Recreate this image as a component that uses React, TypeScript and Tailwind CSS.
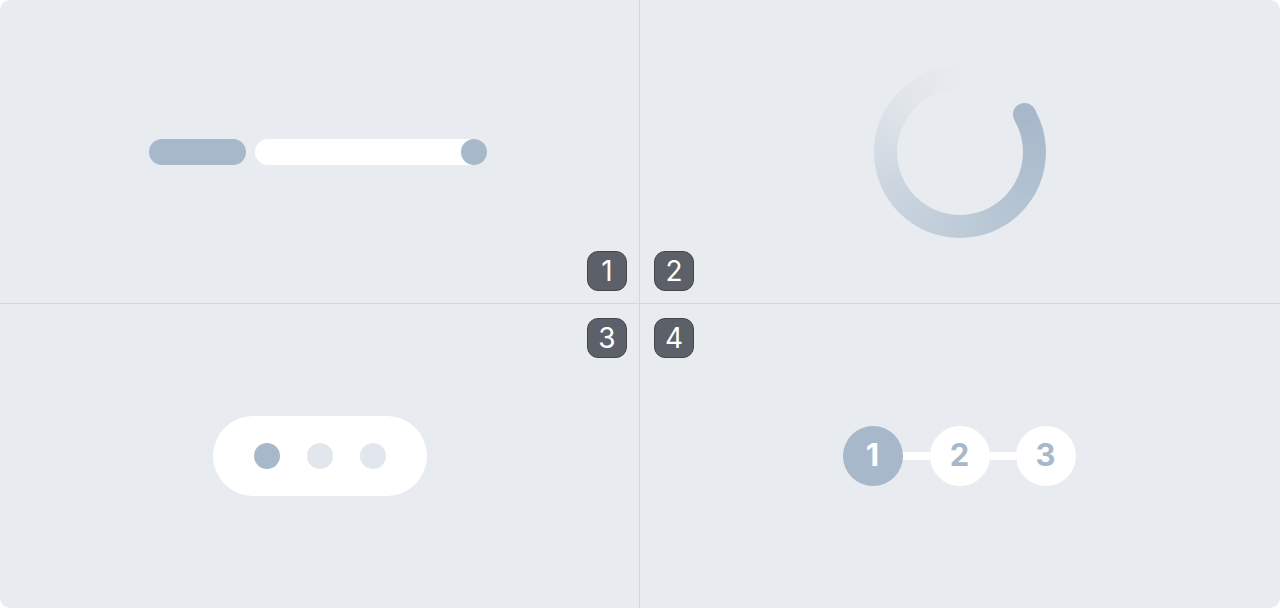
import React from "react";

const fill = "#a7b8ca";

function SliderDemo() {
  return (
    <div className="flex items-center gap-[9px]">
      <div className="h-[26px] w-[97px] rounded-full bg-[#a7b8ca]" />
      <div className="flex h-[26px] w-[232px] items-center justify-end rounded-full bg-white">
        <div className="h-[26px] w-[26px] rounded-full bg-[#a7b8ca]" />
      </div>
    </div>
  );
}

function SpinnerDemo() {
  // ring drawn as a conic gradient, hole punched with a bg-coloured disc
  return (
    <div
      className="relative flex h-[172px] w-[172px] items-center justify-center rounded-full"
      style={{
        background: `conic-gradient(from 60deg, ${fill} 0deg, rgba(181,196,211,0.95) 90deg, rgba(200,210,221,0.9) 180deg, rgba(222,227,233,0.75) 250deg, rgba(232,235,239,0) 302deg)`,
      }}
    >
      <div className="h-[126px] w-[126px] rounded-full bg-[#e8ebef]" />
      <div className="absolute left-[139px] top-[37px] h-[23px] w-[23px] rounded-full bg-[#a7b8ca]" />
    </div>
  );
}

function DotsDemo() {
  return (
    <div className="flex h-[80px] w-[214px] items-center justify-center gap-[27px] rounded-full bg-white">
      <div className="h-[26px] w-[26px] rounded-full bg-[#a7b8ca]" />
      <div className="h-[26px] w-[26px] rounded-full bg-[#e2e7ee]" />
      <div className="h-[26px] w-[26px] rounded-full bg-[#e2e7ee]" />
    </div>
  );
}

function StepperDemo() {
  return (
    <div className="flex items-center">
      <div className="flex h-[60px] w-[60px] items-center justify-center rounded-full bg-[#a7b8ca] text-[31px] font-bold text-white">
        1
      </div>
      <div className="h-[8px] w-[27px] bg-white" />
      <div className="flex h-[60px] w-[60px] items-center justify-center rounded-full bg-white text-[31px] font-bold text-[#a7b8ca]">
        2
      </div>
      <div className="h-[8px] w-[26px] bg-white" />
      <div className="flex h-[60px] w-[60px] items-center justify-center rounded-full bg-white text-[31px] font-bold text-[#a7b8ca]">
        3
      </div>
    </div>
  );
}

function Badge({ n }: { n: number }) {
  return (
    <div className="flex h-[40px] w-[40px] items-center justify-center rounded-[11px] border border-[#43474d] bg-[#5c6069] text-[28px] leading-none text-white">
      {n}
    </div>
  );
}

export default function App() {
  return (
    <div className="h-[608px] w-[1280px] bg-white" style={{ fontFamily: "Inter, 'Noto Sans', sans-serif" }}>
      <div className="relative grid h-full w-full grid-cols-2 grid-rows-2 overflow-hidden rounded-[10px] bg-[#e8ebef]">
        <div className="flex items-center justify-center border-b border-r border-[#d2d7dd] pr-[3px] pt-[1px]">
          <SliderDemo />
        </div>
        <div className="flex items-center justify-center border-b border-[#d2d7dd] pt-[1px]">
          <SpinnerDemo />
        </div>
        <div className="flex items-center justify-center border-r border-[#d2d7dd] pl-[1px] pb-[1px]">
          <DotsDemo />
        </div>
        <div className="flex items-center justify-center pb-[1px] pr-[2px]">
          <StepperDemo />
        </div>

        {/* quadrant labels over the crosshair */}
        <div className="absolute left-[587px] top-[251px] grid grid-cols-2 gap-x-[27px] gap-y-[27px]">
          <Badge n={1} />
          <Badge n={2} />
          <Badge n={3} />
          <Badge n={4} />
        </div>
      </div>
    </div>
  );
}
